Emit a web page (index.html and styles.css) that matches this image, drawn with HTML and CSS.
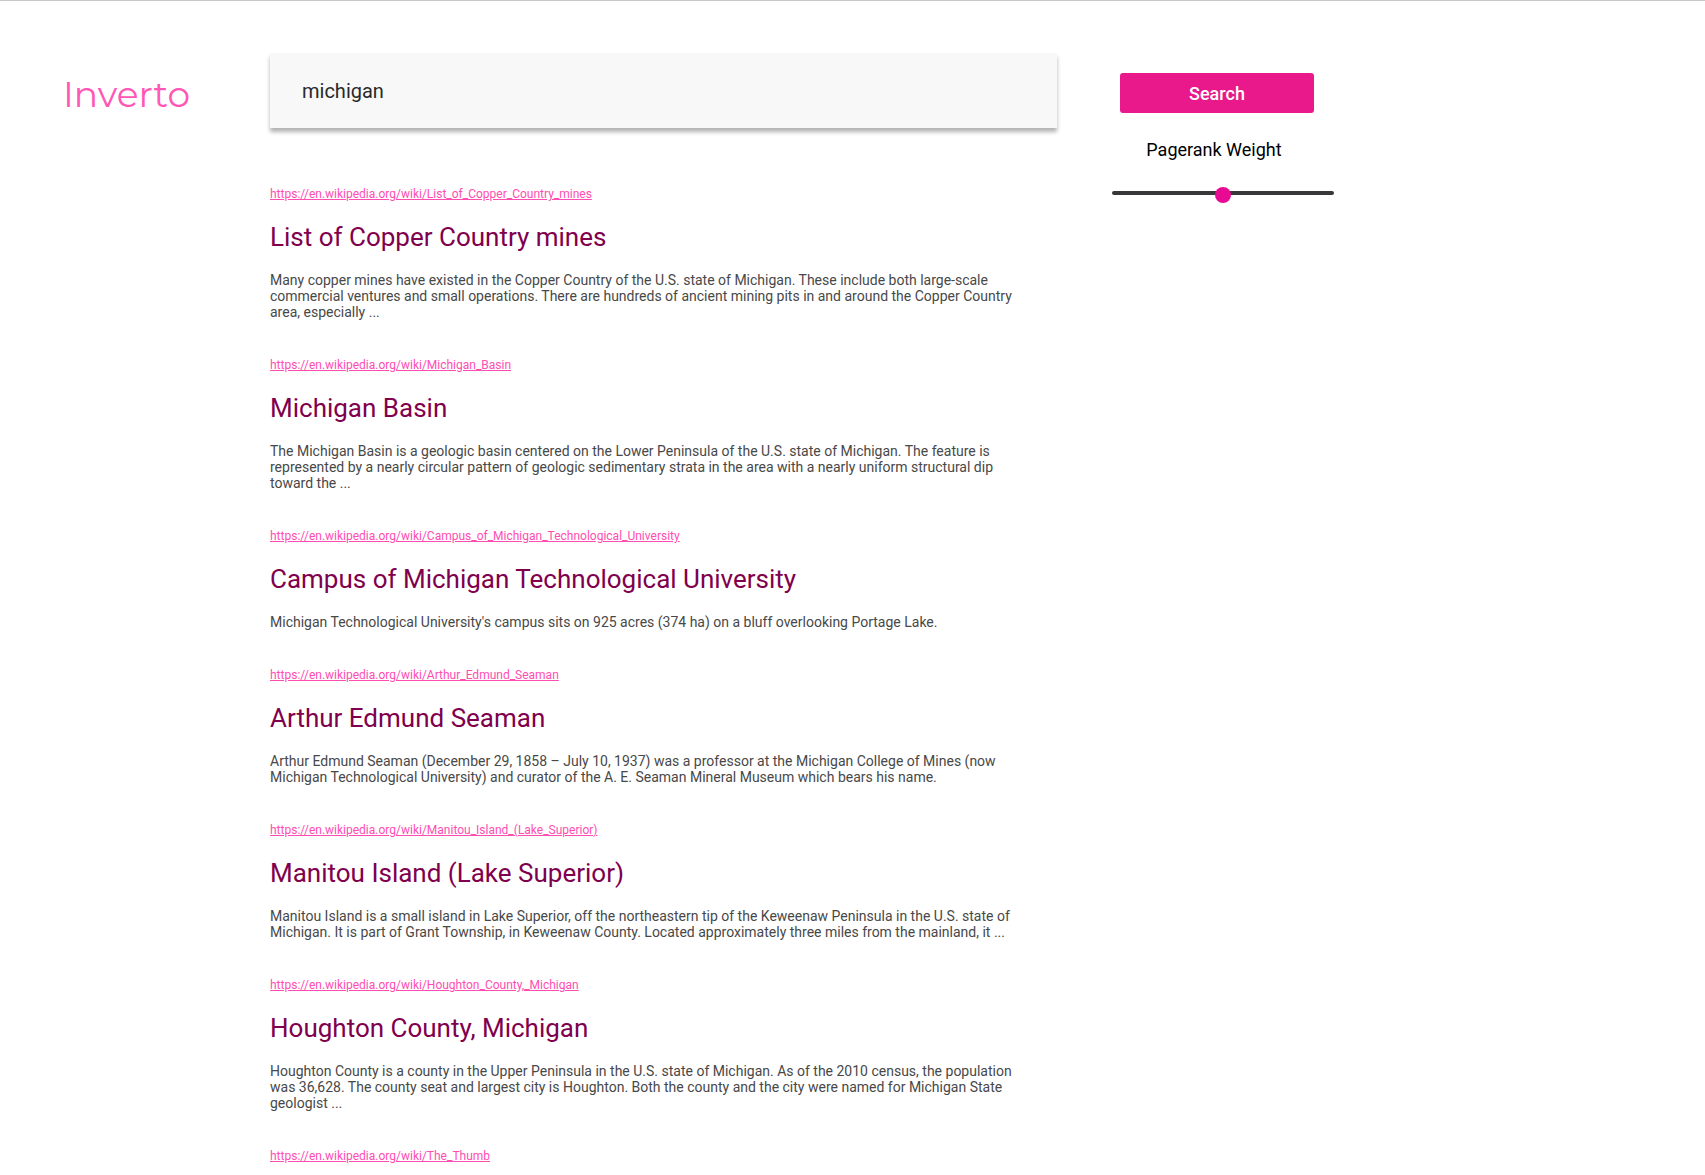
FILE: index.html
```html
<!DOCTYPE html>
<html lang="en">
<head>
<meta charset="utf-8">
<title>Inverto</title>
<link rel="stylesheet" href="styles.css">
</head>
<body>
<form class="page">
  <div class="logo">Inverto</div>
  <input class="query" type="text" value="michigan" aria-label="Search query">
  <aside class="controls">
    <button class="search" type="button">Search</button>
    <label class="weight-label" for="weight">Pagerank Weight</label>
    <input class="weight" id="weight" type="range" min="0" max="1" step="0.01" value="0.5">
  </aside>
  <main class="results">
    <article class="result">
      <a class="url" href="https://en.wikipedia.org/wiki/List_of_Copper_Country_mines">https://en.wikipedia.org/wiki/List_of_Copper_Country_mines</a>
      <h2 class="title">List of Copper Country mines</h2>
      <p class="summary">Many copper mines have existed in the Copper Country of the U.S. state of Michigan. These include both large-scale commercial ventures and small operations. There are hundreds of ancient mining pits in and around the Copper Country area, especially ...</p>
    </article>
    <article class="result">
      <a class="url" href="https://en.wikipedia.org/wiki/Michigan_Basin">https://en.wikipedia.org/wiki/Michigan_Basin</a>
      <h2 class="title">Michigan Basin</h2>
      <p class="summary">The Michigan Basin is a geologic basin centered on the Lower Peninsula of the U.S. state of Michigan. The feature is represented by a nearly circular pattern of geologic sedimentary strata in the area with a nearly uniform structural dip toward the ...</p>
    </article>
    <article class="result">
      <a class="url" href="https://en.wikipedia.org/wiki/Campus_of_Michigan_Technological_University">https://en.wikipedia.org/wiki/Campus_of_Michigan_Technological_University</a>
      <h2 class="title">Campus of Michigan Technological University</h2>
      <p class="summary">Michigan Technological University's campus sits on 925 acres (374 ha) on a bluff overlooking Portage Lake.</p>
    </article>
    <article class="result">
      <a class="url" href="https://en.wikipedia.org/wiki/Arthur_Edmund_Seaman">https://en.wikipedia.org/wiki/Arthur_Edmund_Seaman</a>
      <h2 class="title">Arthur Edmund Seaman</h2>
      <p class="summary">Arthur Edmund Seaman (December 29, 1858 – July 10, 1937) was a professor at the Michigan College of Mines (now Michigan Technological University) and curator of the A. E. Seaman Mineral Museum which bears his name.</p>
    </article>
    <article class="result">
      <a class="url" href="https://en.wikipedia.org/wiki/Manitou_Island_(Lake_Superior)">https://en.wikipedia.org/wiki/Manitou_Island_(Lake_Superior)</a>
      <h2 class="title">Manitou Island (Lake Superior)</h2>
      <p class="summary">Manitou Island is a small island in Lake Superior, off the northeastern tip of the Keweenaw Peninsula in the U.S. state of Michigan. It is part of Grant Township, in Keweenaw County. Located approximately three miles from the mainland, it ...</p>
    </article>
    <article class="result">
      <a class="url" href="https://en.wikipedia.org/wiki/Houghton_County,_Michigan">https://en.wikipedia.org/wiki/Houghton_County,_Michigan</a>
      <h2 class="title">Houghton County, Michigan</h2>
      <p class="summary">Houghton County is a county in the Upper Peninsula in the U.S. state of Michigan. As of the 2010 census, the population was 36,628. The county seat and largest city is Houghton. Both the county and the city were named for Michigan State geologist ...</p>
    </article>
    <article class="result">
      <a class="url" href="https://en.wikipedia.org/wiki/The_Thumb">https://en.wikipedia.org/wiki/The_Thumb</a>
    </article>
  </main>
</form>
</body>
</html>
```

FILE: styles.css
```css
* { box-sizing: border-box; }
body {
  margin: 0;
  border-top: 1px solid #c8c8c8;
  background: #fff;
  font-family: Roboto, sans-serif;
}
.page {
  display: grid;
  grid-template-columns: 152px minmax(0, 787px) 222px;
  grid-template-rows: 75px auto;
  column-gap: 55px;
  row-gap: 58px;
  padding: 52px 63px 0;
}
.logo {
  align-self: center;
  padding-top: 6px;
  font-family: Montserrat, "Open Sans", sans-serif;
  font-size: 36px;
  line-height: 44px;
  color: #ff57b5;
}
.query {
  width: 100%;
  padding: 0 32px;
  border: 0;
  background: #f8f8f8;
  box-shadow: 0 4px 4px rgba(0, 0, 0, 0.3);
  font: 20px Roboto, sans-serif;
  color: #2a2a2a;
}
.controls {
  grid-column: 3;
  grid-row: 1 / 3;
  padding-top: 20px;
}
.search {
  display: block;
  width: 194px;
  height: 40px;
  margin-left: 8px;
  border: 0;
  border-radius: 3px;
  background: #e9188b;
  color: #fff;
  font: 500 18px Roboto, sans-serif;
}
.weight-label {
  display: block;
  width: 204px;
  margin-top: 26px;
  font-size: 18px;
  line-height: 22px;
  text-align: center;
}
.weight {
  display: block;
  width: 100%;
  height: 20px;
  margin: 22px 0 0;
  appearance: none;
  background: transparent;
}
.weight::-webkit-slider-runnable-track {
  height: 4px;
  border-radius: 2px;
  background: #38383a;
}
.weight::-webkit-slider-thumb {
  width: 16px;
  height: 16px;
  margin-top: -4px;
  appearance: none;
  border-radius: 50%;
  background: #e90a94;
}
.results {
  grid-column: 2;
  padding-right: 40px;
}
.result { margin-bottom: 37px; }
.result:last-child { margin-bottom: 0; }
.url {
  display: block;
  font-size: 12px;
  line-height: 16px;
  color: #ff4db2;
}
.title {
  margin: 20px 0;
  font-size: 26px;
  line-height: 30px;
  font-weight: 400;
  color: #80004d;
}
.summary {
  margin: 0;
  font-size: 14px;
  line-height: 16px;
  color: #484848;
}
```
